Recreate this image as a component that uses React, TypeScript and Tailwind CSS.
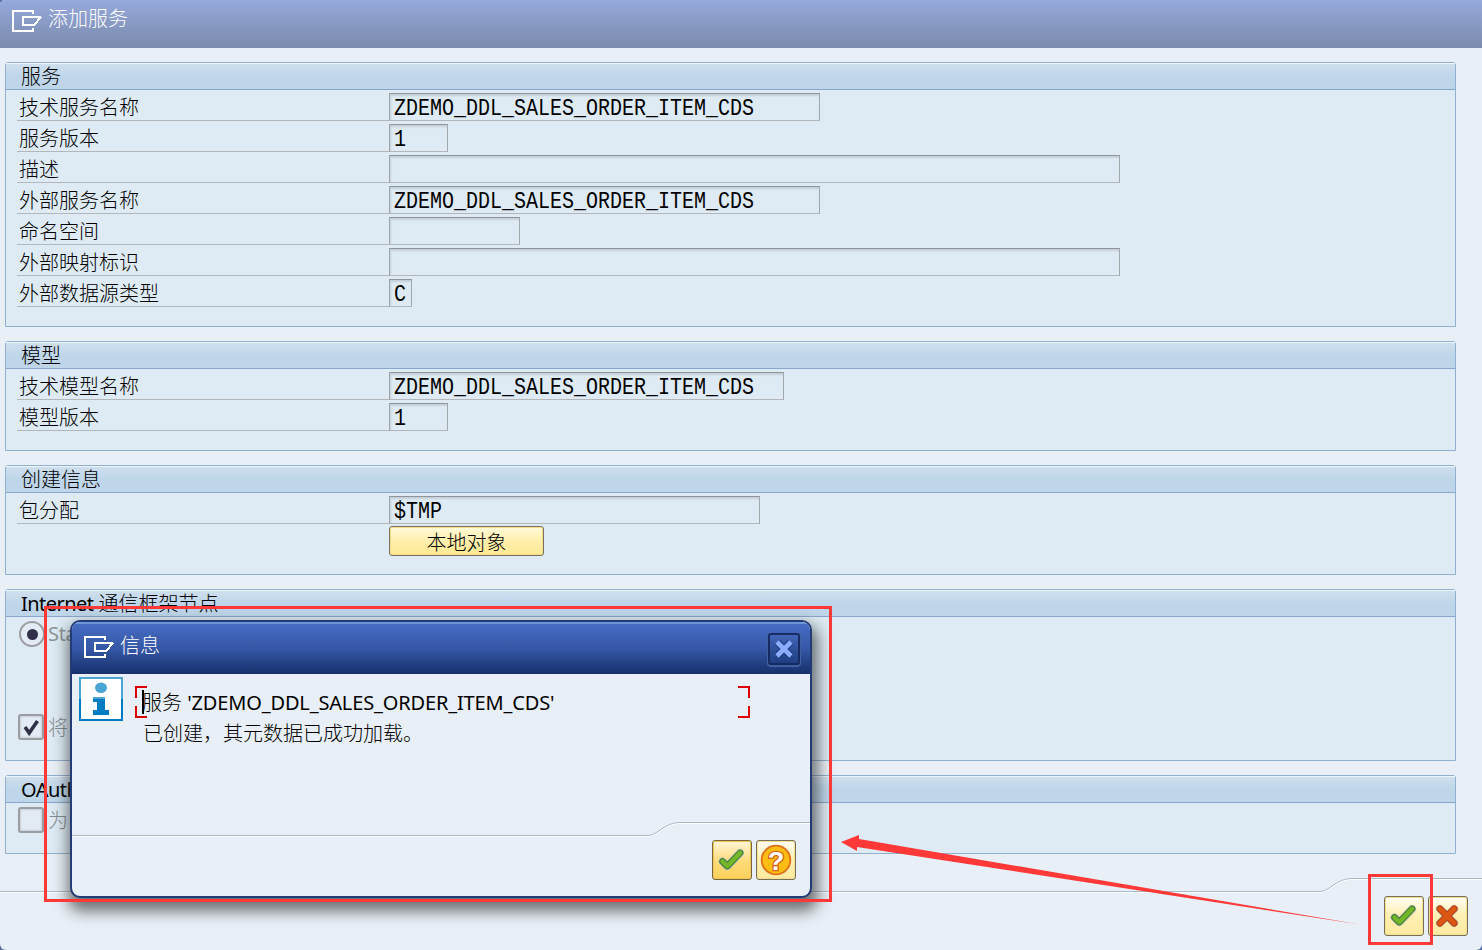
import type { ReactNode } from "react";

type Field = {
  label: string;
  value?: string;
  width: string;
};

const serviceFields: Field[] = [
  { label: "技术服务名称", value: "ZDEMO_DDL_SALES_ORDER_ITEM_CDS", width: "w-[431px]" },
  { label: "服务版本", value: "1", width: "w-[59px]" },
  { label: "描述", width: "w-[731px]" },
  { label: "外部服务名称", value: "ZDEMO_DDL_SALES_ORDER_ITEM_CDS", width: "w-[431px]" },
  { label: "命名空间", width: "w-[131px]" },
  { label: "外部映射标识", width: "w-[731px]" },
  { label: "外部数据源类型", value: "C", width: "w-[23px]" },
];

const modelFields: Field[] = [
  { label: "技术模型名称", value: "ZDEMO_DDL_SALES_ORDER_ITEM_CDS", width: "w-[395px]" },
  { label: "模型版本", value: "1", width: "w-[59px]" },
];

const WindowIcon = () => (
  <svg width="30" height="22" viewBox="0 0 30 22" fill="none" stroke="#fff" strokeWidth="2">
    <path d="M21 4V1H1V21H21V18" />
    <path d="M29 7H11V15H22L29 7" shapeRendering="crispEdges" />
  </svg>
);

const CheckIcon = () => (
  <svg width="40" height="40" viewBox="0 0 40 40" fill="none" strokeLinecap="round" strokeLinejoin="round">
    <path d="M10 21.5L15 26.5L28.5 12.5" stroke="#bcc2ba" strokeWidth="8.4" />
    <path d="M10 21.5L15 26.5L28.5 12.5" stroke="#3d7c2a" strokeWidth="6.8" />
    <path d="M10 21.5L15 26.5L28.5 12.5" stroke="#74b72a" strokeWidth="4.6" />
  </svg>
);

const CancelIcon = () => (
  <svg width="40" height="40" viewBox="0 0 40 40" fill="none" strokeLinecap="round">
    <path d="M11.5 12.5L26.5 27.5M26.5 12.5L11.5 27.5" stroke="#c3b9a5" strokeWidth="8.4" />
    <path d="M11.5 12.5L26.5 27.5M26.5 12.5L11.5 27.5" stroke="#b5410f" strokeWidth="7" />
    <path d="M11.5 12.5L26.5 27.5M26.5 12.5L11.5 27.5" stroke="#dd5714" strokeWidth="5" />
  </svg>
);

const HelpIcon = () => (
  <svg width="40" height="40" viewBox="0 0 40 40">
    <circle cx="20" cy="20" r="15.1" fill="#fdbd12" stroke="#dd6f1c" strokeWidth="1.9" />
    <text
      x="20"
      y="30"
      textAnchor="middle"
      className="font-['Liberation_Sans',sans-serif] text-[28px] font-bold"
      fill="#fff"
      stroke="#d9641c"
      strokeWidth="2.8"
      paintOrder="stroke"
    >
      ?
    </text>
  </svg>
);

const InfoIcon = () => (
  <svg width="44" height="44" viewBox="0 0 44 44" className="shrink-0">
    <rect width="44" height="22" fill="#4aa5d4" />
    <rect y="22" width="44" height="22" fill="#007dc2" />
    <rect x="2" y="2" width="40" height="40" fill="#fff" />
    <ellipse cx="22" cy="10.8" rx="6" ry="5.2" fill="#4aa5d4" />
    <path d="M14 20H26V33H30V38H14V33H18V25H14Z" fill="#007dc2" />
    <path d="M14 20H26V22H14Z" fill="#4aa5d4" />
  </svg>
);

// Footer rule that steps up by 13px before the buttons
const FooterRule = ({ width, bend }: { width: number; bend: number }) => {
  const d = `M0 13.5H${bend}C${bend + 9} 13.5 ${bend + 17} 0.5 ${bend + 31} 0.5H${width}`;
  return (
    <svg width={width} height="16" fill="none" className="block shrink-0">
      <path d={d} stroke="#fff" transform="translate(0 1)" />
      <path d={d} stroke="#a9b9cc" />
    </svg>
  );
};

const IconButton = ({ children, active }: { children: ReactNode; active?: boolean }) => (
  <button
    className={`size-10 shrink-0 rounded-[3px] border flex items-center justify-center ${
      active
        ? "border-[#77663a] bg-linear-to-b from-[#fff5d8] via-[#ffdc7c] to-[#fbd159] shadow-[inset_0_0_0_1px_#f2c65b]"
        : "border-[#74705c] bg-linear-to-b from-[#fffdf0] from-5% via-[#fff0b4] via-45% to-[#feeba0] shadow-[inset_0_0_0_1px_#f7dd8c]"
    }`}
  >
    {children}
  </button>
);

const Group = ({
  title,
  latin,
  height,
  children,
}: {
  title?: string;
  latin?: string;
  height: string;
  children: ReactNode;
}) => (
  <section className={`${height} w-[1451px] rounded-t-[3px] border border-[#91b0cf] bg-[#deebf4]`}>
    <h2 className="h-[27px] border-b border-[#86a6ca] bg-linear-to-b from-[#d0e0ee] to-[#bfd6ea] to-50% shadow-[inset_0_1px_0_#edf4fa] pl-[15px] text-[20px] leading-[27px] font-light whitespace-pre">
      {latin && <span className="font-normal tracking-[-0.55px]">{latin}</span>}
      {title}
    </h2>
    <div className="flex flex-col gap-[3px] pt-[3px] pl-[11px]">{children}</div>
  </section>
);

const FieldRow = ({ label, value, width }: Field) => (
  <div className="flex h-7">
    <label className="w-[372px] border-b border-[#b3b7ba] pl-[2px] text-[20px] leading-[30px] font-light">
      {label}
    </label>
    <div
      className={`${width} border border-t-[#8f9499] border-l-[#a0a4a8] border-r-[#a3a7ab] border-b-[#b3b7ba] pl-1 shadow-[inset_1px_2px_2px_#c5d0da] overflow-hidden`}
    >
      <span className="block w-fit origin-left scale-x-[0.8333] font-['Liberation_Mono',monospace] text-[24px] leading-[29px]">
        {value}
      </span>
    </div>
  </div>
);

const Checkbox = ({ checked }: { checked?: boolean }) => (
  <span className="size-[26px] shrink-0 rounded-[3px] border-2 border-[#9b9da0] bg-[#e3ebf4] shadow-[inset_0_0_2px_1px_#c8d0dc] flex items-center justify-center">
    {checked && (
      <svg width="18" height="18" viewBox="0 0 18 18" fill="none">
        <path d="M3 9L7.2 15L15.5 3" stroke="#303047" strokeWidth="3.6" />
      </svg>
    )}
  </span>
);

const MessageDialog = () => (
  <div className="absolute left-[70px] top-[620px] flex h-[278px] w-[742px] flex-col overflow-hidden rounded-[10px] border-2 border-[#233c75] bg-[#e8eff6] shadow-[2px_9px_15px_4px_rgba(40,40,40,0.65)]">
    <header className="flex h-[52px] shrink-0 items-start border-t-2 border-[#6c94d6] bg-linear-to-b from-[#466bc2] via-[#3557a6] to-[#17306b] pl-3 pr-[10px] pt-[9px]">
      <div className="pt-[3px]">
        <WindowIcon />
      </div>
      <h1 className="grow pl-[6px] text-[20px] leading-[26px] font-light text-white">信息</h1>
      <button className="flex size-8 items-center justify-center rounded-[3px] border-2 border-[#152b61] bg-linear-to-b from-[#4266b8] to-[#1f3d80] shadow-[0_1px_0_1px_#40609f]">
        <svg width="20" height="20" viewBox="0 0 20 20" fill="none">
          <path d="M3.5 3.5L16.5 16.5M16.5 3.5L3.5 16.5" stroke="#1d3b7e" strokeWidth="7" />
          <path d="M3 3L17 17M17 3L3 17" stroke="#8badff" strokeWidth="4.6" />
        </svg>
      </button>
    </header>
    <div className="flex grow pl-[7px] pt-[3px]">
      <InfoIcon />
      <div className="ml-3 mt-[9px]">
        <div className="relative flex h-8 w-[615px] items-center pl-[7px] pt-0.5">
          <svg width="615" height="32" fill="none" stroke="#dc0000" strokeWidth="2" className="absolute left-0 top-0">
            <path d="M12 1H1V12M1 20V31H12M603 1H614V12M614 20V31H603" />
            <path d="M8 4V28" stroke="#000" />
          </svg>
          <p className="whitespace-pre text-[20px] font-light">
            服务 <span className="font-normal tracking-[-0.15px]">'ZDEMO_DDL_SALES_ORDER_ITEM_CDS'</span>
          </p>
        </div>
        <p className="pl-2 text-[20px] leading-8 font-light">已创建，其元数据已成功加载。</p>
      </div>
    </div>
    <FooterRule width={738} bend={576} />
    <div className="flex shrink-0 justify-end gap-1 pb-4 pr-[14px] pt-0.5">
      <IconButton active>
        <CheckIcon />
      </IconButton>
      <IconButton>
        <HelpIcon />
      </IconButton>
    </div>
  </div>
);

const App = () => {
  return (
    <div className="relative h-[950px] w-[1482px] overflow-hidden bg-[#5b6ca3] font-['Noto_Sans','Noto_Sans_CJK_SC',sans-serif] text-black">
      <div className="flex h-[950px] flex-col overflow-hidden rounded-tl-[5px] rounded-b-[6px] bg-[#e8eff6]">
        <header className="flex h-12 shrink-0 bg-linear-to-b from-[#96a9dc] to-[#7b8aad] pl-3 pt-[10px]">
          <WindowIcon />
          <h1 className="pl-[6px] text-[20px] leading-[18px] font-light text-white">添加服务</h1>
        </header>

        <main className="flex h-[830px] shrink-0 flex-col gap-[14px] pl-[5px] pt-[14px]">
          <Group title="服务" height="h-[265px]">
            {serviceFields.map((field) => (
              <FieldRow key={field.label} {...field} />
            ))}
          </Group>

          <Group title="模型" height="h-[110px]">
            {modelFields.map((field) => (
              <FieldRow key={field.label} {...field} />
            ))}
          </Group>

          <Group title="创建信息" height="h-[110px]">
            <FieldRow label="包分配" value="$TMP" width="w-[371px]" />
            <button className="-mt-px ml-[372px] h-[30px] w-[155px] rounded-[3px] border border-[#77725f] bg-linear-to-b from-[#fffad9] via-[#fff0b0] via-45% to-[#fde991] pt-0.5 shadow-[inset_0_0_0_1px_#f6dc8c] text-[20px] leading-7 font-light">
              本地对象
            </button>
          </Group>

          <Group latin="Internet" title=" 通信框架节点" height="h-[172px]">
            <div className="flex h-7 items-center pl-[2px] text-[20px] text-[#8d9499]">
              <span className="flex size-[26px] items-center justify-center rounded-full border-2 border-[#9b9da0] bg-[#e3ebf4]">
                <span className="size-[11px] rounded-full bg-[#30304a]" />
              </span>
              <span className="pl-[3px] tracking-[-0.3px]">Sta</span>
            </div>
            <div className="mt-[62px] flex h-7 items-center pl-px text-[20px] text-[#848b90] font-light">
              <Checkbox checked />
              <span className="pl-1 pt-0.5">将</span>
            </div>
          </Group>

          <Group latin="OAuth" height="h-[79px]">
            <div className="flex h-7 items-center pl-px text-[20px] text-[#848b90] font-light">
              <Checkbox />
              <span className="pl-1 pt-0.5">为</span>
            </div>
          </Group>
        </main>

        <footer>
          <FooterRule width={1482} bend={1320} />
          <div className="flex justify-end gap-1 pr-[14px] pt-0.5">
            <IconButton>
              <CheckIcon />
            </IconButton>
            <IconButton>
              <CancelIcon />
            </IconButton>
          </div>
        </footer>
      </div>

      <MessageDialog />

      <div className="absolute left-[44px] top-[606px] h-[296px] w-[788px] border-3 border-[#ff3838]" />
      <div className="absolute left-[1368px] top-[874px] h-[71px] w-[65px] border-3 border-[#ff3838]" />
      <svg width="520" height="94" className="absolute left-[841px] top-[834px]" fill="#ff3838">
        <path d="M0 8L18 1V5L519 90.5L16 13V17Z" />
      </svg>
    </div>
  );
};

export default App;
